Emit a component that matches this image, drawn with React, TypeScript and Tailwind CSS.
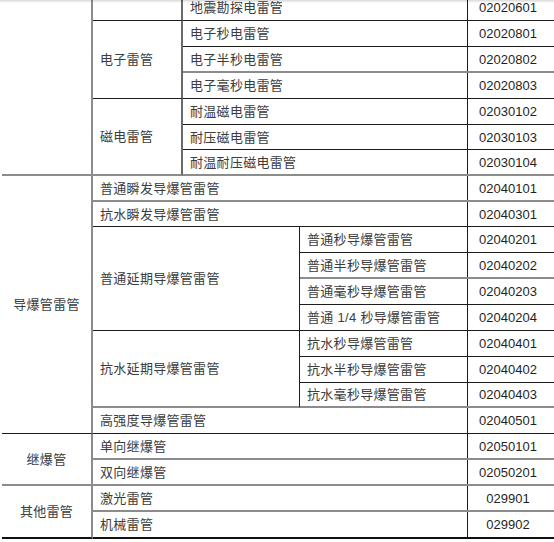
import React from "react";

type BK = "d" | "g" | "t";
type HK = 25 | 26 | 27;

const BB: Record<BK, string> = {
  d: "border-b border-b-[#1c1c1c]",
  g: "border-b-2 border-b-[#8c8c8c]",
  t: "border-b-2 border-b-[#111111]",
};

const HH: Record<HK, string> = {
  25: "h-[25px]",
  26: "h-[26px]",
  27: "h-[27px]",
};

type Leaf = { t: string; c: string; b: BK; h: HK };

function LeafRow({ leaf, w }: { leaf: Leaf; w: string }) {
  return (
    <div className={`flex ${HH[leaf.h]} ${BB[leaf.b]}`}>
      <div className={`${w} shrink-0 flex items-center px-[7px] tracking-[0.3px] border-r border-r-[#1c1c1c] text-[#3c3c3c]`}>
        {leaf.t}
      </div>
      <div className="w-[86px] shrink-0 flex items-center justify-center pr-[6px] text-[#1f1f1f]">
        {leaf.c}
      </div>
    </div>
  );
}

function Sub({
  label,
  leaves,
  b,
  col2,
  col3,
  col2Border,
}: {
  label: string;
  leaves: Leaf[];
  b: BK;
  col2: string;
  col3: string;
  col2Border: string;
}) {
  return (
    <div className="flex">
      <div className={`${col2} shrink-0 flex items-center px-[7px] tracking-[0.3px] text-[#3c3c3c] ${col2Border} ${BB[b]}`}>
        {label}
      </div>
      <div className="flex flex-col">
        {leaves.map((l) => (
          <LeafRow key={l.c} leaf={l} w={col3} />
        ))}
      </div>
    </div>
  );
}

function Group({
  label,
  b,
  children,
}: {
  label: string;
  b: BK;
  children: React.ReactNode;
}) {
  return (
    <div className="flex">
      <div className={`w-[91px] shrink-0 flex items-center justify-center tracking-[0.3px] border-r-2 border-r-[#8c8c8c] text-[#3c3c3c] ${BB[b]}`}>
        {label}
      </div>
      <div className="flex flex-col w-[461px]">{children}</div>
    </div>
  );
}

const UP2 = "w-[90px]";
const UP3 = "w-[285px]";
const LO2 = "w-[207px]";
const LO3 = "w-[168px]";
const WIDE = "w-[375px]";
const UPB = "border-r-2 border-r-[#6a6a6a]";
const LOB = "border-r border-r-[#1c1c1c]";

export default function App() {
  return (
    <div className="relative w-[554px] h-[542px] overflow-hidden bg-white">
      <div className="ml-[2px] mt-[-5px] w-[552px] text-[13px] leading-none font-['Liberation_Sans','Noto_Sans_CJK_SC',sans-serif]">
        <Group label="" b="g">
          <Sub
            label=""
            b="d"
            col2={UP2}
            col3={UP3}
            col2Border={UPB}
            leaves={[{ t: "地震勘探电雷管", c: "02020601", b: "d", h: 26 }]}
          />
          <Sub
            label="电子雷管"
            b="d"
            col2={UP2}
            col3={UP3}
            col2Border={UPB}
            leaves={[
              { t: "电子秒电雷管", c: "02020801", b: "d", h: 26 },
              { t: "电子半秒电雷管", c: "02020802", b: "g", h: 26 },
              { t: "电子毫秒电雷管", c: "02020803", b: "d", h: 26 },
            ]}
          />
          <Sub
            label="磁电雷管"
            b="g"
            col2={UP2}
            col3={UP3}
            col2Border={UPB}
            leaves={[
              { t: "耐温磁电雷管", c: "02030102", b: "d", h: 26 },
              { t: "耐压磁电雷管", c: "02030103", b: "d", h: 25 },
              { t: "耐温耐压磁电雷管", c: "02030104", b: "g", h: 26 },
            ]}
          />
        </Group>

        <Group label="导爆管雷管" b="d">
          <LeafRow leaf={{ t: "普通瞬发导爆管雷管", c: "02040101", b: "g", h: 26 }} w={WIDE} />
          <LeafRow leaf={{ t: "抗水瞬发导爆管雷管", c: "02040301", b: "d", h: 25 }} w={WIDE} />
          <Sub
            label="普通延期导爆管雷管"
            b="d"
            col2={LO2}
            col3={LO3}
            col2Border={LOB}
            leaves={[
              { t: "普通秒导爆管雷管", c: "02040201", b: "d", h: 26 },
              { t: "普通半秒导爆管雷管", c: "02040202", b: "g", h: 26 },
              { t: "普通毫秒导爆管雷管", c: "02040203", b: "d", h: 26 },
              { t: "普通 1/4 秒导爆管雷管", c: "02040204", b: "d", h: 26 },
            ]}
          />
          <Sub
            label="抗水延期导爆管雷管"
            b="g"
            col2={LO2}
            col3={LO3}
            col2Border={LOB}
            leaves={[
              { t: "抗水秒导爆管雷管", c: "02040401", b: "d", h: 26 },
              { t: "抗水半秒导爆管雷管", c: "02040402", b: "d", h: 26 },
              { t: "抗水毫秒导爆管雷管", c: "02040403", b: "g", h: 25 },
            ]}
          />
          <LeafRow leaf={{ t: "高强度导爆管雷管", c: "02040501", b: "d", h: 26 }} w={WIDE} />
        </Group>

        <Group label="继爆管" b="g">
          <LeafRow leaf={{ t: "单向继爆管", c: "02050101", b: "g", h: 26 }} w={WIDE} />
          <LeafRow leaf={{ t: "双向继爆管", c: "02050201", b: "g", h: 26 }} w={WIDE} />
        </Group>

        <Group label="其他雷管" b="t">
          <LeafRow leaf={{ t: "激光雷管", c: "029901", b: "g", h: 26 }} w={WIDE} />
          <LeafRow leaf={{ t: "机械雷管", c: "029902", b: "t", h: 27 }} w={WIDE} />
        </Group>
      </div>
      <div className="absolute left-0 top-0 w-full h-[3px] bg-gradient-to-b from-black/15 to-transparent" />
    </div>
  );
}
